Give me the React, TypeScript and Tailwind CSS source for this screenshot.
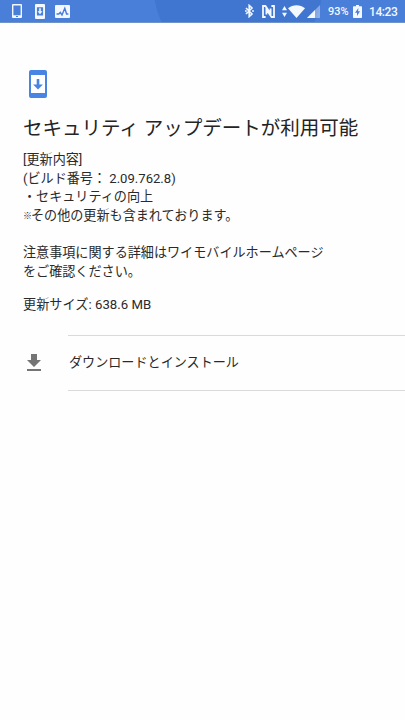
import type { ReactNode } from 'react';

const notes = [
  '[更新内容]',
  '(ビルド番号： 2.09.762.8)',
  '・セキュリティの向上',
  '※その他の更新も含まれております。',
  '',
  '注意事項に関する詳細はワイモバイルホームページ',
  'をご確認ください。',
];

function StatusIcon({ className, viewBox, children }: { className: string; viewBox: string; children: ReactNode }) {
  return (
    <svg aria-hidden="true" viewBox={viewBox} className={`shrink-0 ${className}`} fill="currentColor">
      {children}
    </svg>
  );
}

function NoteLine({ text }: { text: string }) {
  // the reference mark is set narrower than a full-width glyph
  if (text.startsWith('※')) {
    return (
      <p className="flex h-[18.7px]">
        <span className="w-[8px] text-[9px]">※</span>
        <span>{text.slice(1)}</span>
      </p>
    );
  }
  return <p className="h-[18.7px]">{text}</p>;
}

function StatusBar() {
  return (
    <header className="flex h-[23px] items-center border-b border-[#6f93c9] bg-[radial-gradient(circle_at_238px_-14px,#4076d0_84px,#497fd9_85px)] pr-[7px] pl-3 text-[#f3f8ff]">
      <StatusIcon className="h-[14px] w-[10px]" viewBox="0 0 10 14">
        <path fillRule="evenodd" d="M1 0h8a1 1 0 0 1 1 1v12a1 1 0 0 1-1 1H1a1 1 0 0 1-1-1V1a1 1 0 0 1 1-1zm.4 1.4v9.8h7.2V1.4zM4 12v1h2v-1z" />
      </StatusIcon>
      <StatusIcon className="ml-[13px] h-[15px] w-[10px]" viewBox="0 0 10 15">
        <path fillRule="evenodd" d="M1 0h8a1 1 0 0 1 1 1v13a1 1 0 0 1-1 1H1a1 1 0 0 1-1-1V1a1 1 0 0 1 1-1zm.9 3.2v8.4h6.2V3.2z" />
        <path d="M4.2 4.2h1.6v3h1.7L5 10.2 2.5 7.2h1.7z" />
      </StatusIcon>
      <StatusIcon className="ml-[10px] h-[13px] w-[15px]" viewBox="0 0 15 13">
        <rect width="15" height="13" rx="1" />
        <path d="M1.5 9h2.3l1.5-1.6L7 10l2.8-6.8L11.6 9h1.8" fill="none" stroke="#477dd7" strokeWidth="1.4" />
      </StatusIcon>

      <StatusIcon className="ml-auto h-[14px] w-[9px]" viewBox="0 0 9 14">
        <path d="M1 4l6 6-2.8 2.6V1.4L7 4l-6 6" fill="none" stroke="currentColor" strokeWidth="1.6" />
        <circle cx=".9" cy="7" r=".9" />
        <circle cx="8" cy="7" r=".9" />
      </StatusIcon>
      <StatusIcon className="ml-[8px] h-[13px] w-[13px]" viewBox="0 0 13 13">
        <path d="M3.6 12H1V1h2.4l5.2 7.6V3.5M9.4 1H12v11H9.6L4.4 4.4v5.1" fill="none" stroke="currentColor" strokeWidth="1.8" />
      </StatusIcon>
      <StatusIcon className="ml-[7px] h-[11px] w-[5px]" viewBox="0 0 5 11">
        <path d="M2.5 0L5 4.2H0zM2.5 11L0 6.8h5z" />
      </StatusIcon>
      <StatusIcon className="ml-[1px] h-[13px] w-[17px]" viewBox="0 0 17 13">
        <path d="M0 3.2C4.8-.9 12.2-.9 17 3.2L8.5 13z" />
      </StatusIcon>
      <StatusIcon className="ml-[2px] h-[13px] w-[13px]" viewBox="0 0 13 13">
        <path d="M0 13L13 0v13z" opacity=".4" />
        <path d="M0 13l8-8v8z" />
      </StatusIcon>
      <span className="mt-px ml-[8px] w-[22px] text-[11px] leading-none font-medium whitespace-nowrap">93%</span>
      <StatusIcon className="ml-[3px] h-[13px] w-[9px]" viewBox="0 0 9 13">
        <path fillRule="evenodd" d="M3 0h3v1.2h2.2a.8.8 0 0 1 .8.8v10.2a.8.8 0 0 1-.8.8H.8a.8.8 0 0 1-.8-.8V2a.8.8 0 0 1 .8-.8H3zm2.4 3L2 7.8h2V11l3-4.7H5.1z" />
      </StatusIcon>
      <span className="mt-px ml-[7px] w-[29px] text-[12px] leading-none font-medium tracking-[-0.4px] whitespace-nowrap">14:23</span>
    </header>
  );
}

export default function App() {
  return (
    <div className="flex h-[720px] w-[405px] flex-col overflow-hidden bg-[#fefefe] font-['Roboto','Noto_Sans_CJK_JP',sans-serif] text-[#2a2a2a]" lang="ja">
      <StatusBar />

      <main>
        <section className="px-[23px] pt-[47px]">
          <svg aria-hidden="true" viewBox="0 0 18 28" className="ml-[6px] h-[28px] w-[18px]" fill="#4784e4">
            <path fillRule="evenodd" d="M2 0h14a2 2 0 0 1 2 2v24a2 2 0 0 1-2 2H2a2 2 0 0 1-2-2V2a2 2 0 0 1 2-2zm0 5v18h14V5z" />
            <path d="M7.7 9h2.6v5.5h3.6L9 19.6 4.1 14.5h3.6z" />
          </svg>
          <h1 className="mt-[17px] text-[19.5px] leading-[28px] whitespace-nowrap text-[#242424]">
            セキュリティ アップデートが利用可能
          </h1>
          <div className="mt-[8px] text-[13.1px] leading-[18.7px] whitespace-nowrap">
            {notes.map((line, i) => (
              <NoteLine key={i} text={line || '\u00a0'} />
            ))}
          </div>
          <p className="mt-[13px] text-[13.2px] leading-[19px]">更新サイズ: 638.6 MB</p>
        </section>

        <button type="button" className="mt-[21px] flex w-full items-center text-left">
          <svg aria-hidden="true" viewBox="0 0 14 17" className="ml-[27px] h-[17px] w-[14px]" fill="#757575">
            <path d="M4 0h6v6h4l-7 7-7-7h4zM0 15h14v2H0z" />
          </svg>
          <span className="ml-[27px] flex h-[56px] flex-1 items-center border-y border-[#dadada] pt-px pl-px text-[13.1px]">
            ダウンロードとインストール
          </span>
        </button>
      </main>
    </div>
  );
}
